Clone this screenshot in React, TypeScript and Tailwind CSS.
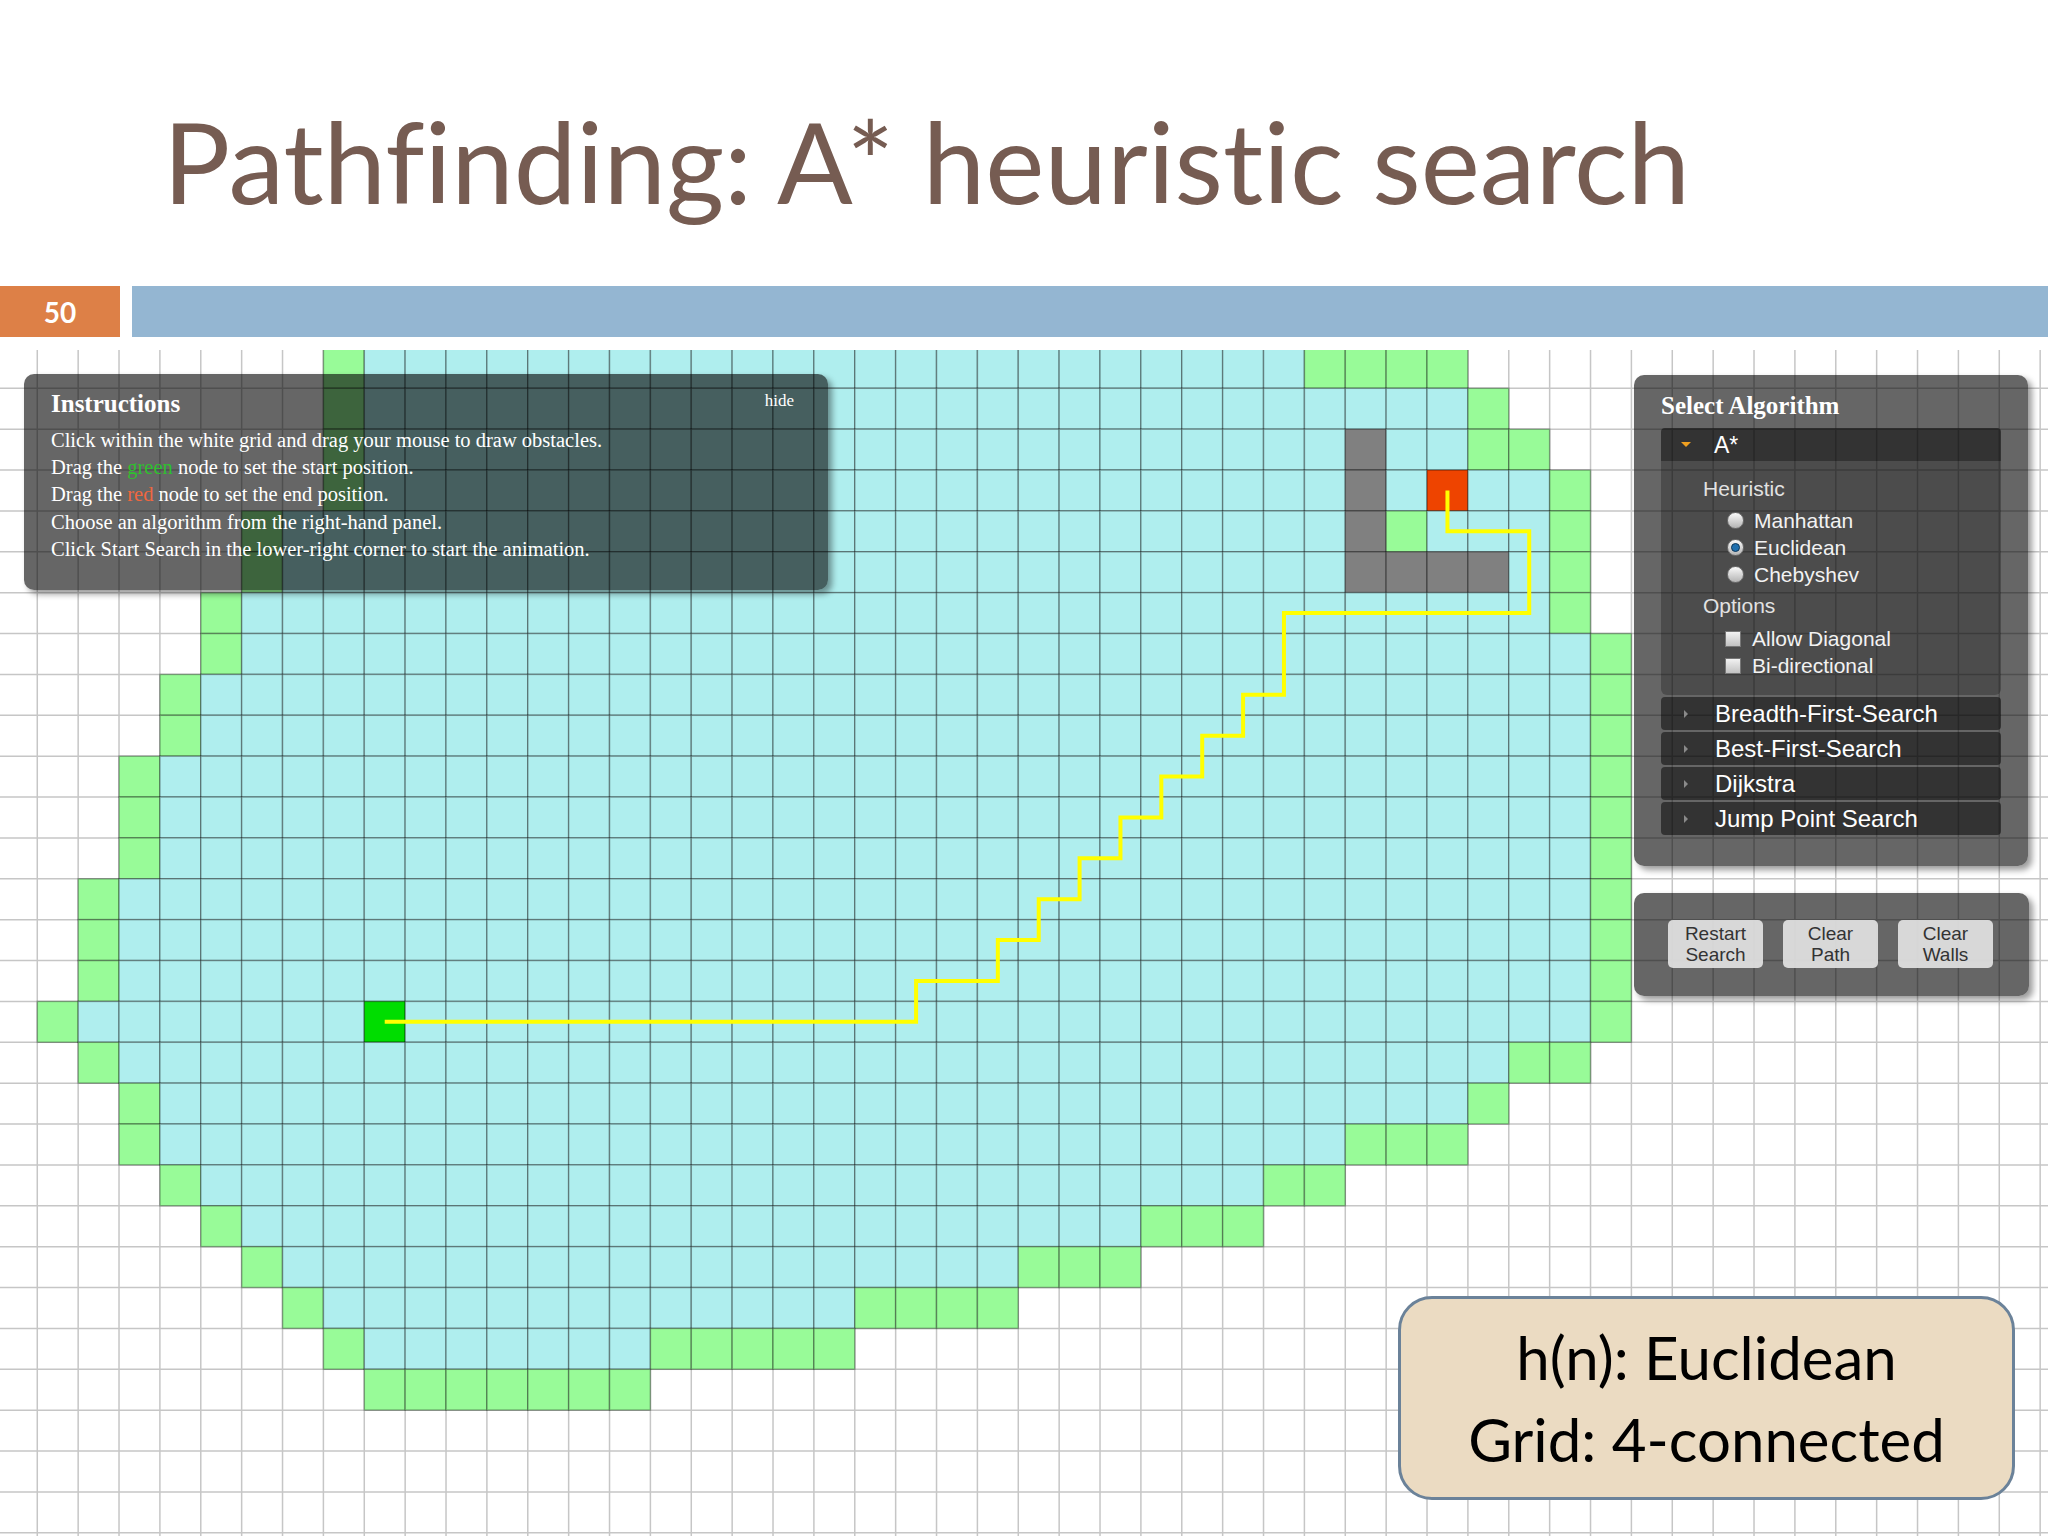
import React from "react";

// grid geometry (px), measured against the slide
const CELL = 40.875;
const OX = -3.6;
const OY = -2.6;
const COLS = 51;
const ROWS = 29;
const W = 2048;
const H = 1186;

type Kind = "open" | "closed" | "wall" | "start" | "end";

const FILL: Record<Kind, string> = {
  open: "#98fb98",
  closed: "#afeeee",
  wall: "#808080",
  start: "#00dd00",
  end: "#ee4400",
};

// per row: [left open col, closed from, closed to, right open from, right open to]
const SPANS: [number, number, number, number, number][] = [
  [8, 9, 31, 32, 35],
  [8, 9, 35, 36, 36],
  [8, 9, 35, 36, 37],
  [8, 9, 37, 38, 38],
  [6, 7, 37, 38, 38],
  [6, 7, 37, 38, 38],
  [5, 6, 37, 38, 38],
  [5, 6, 38, 39, 39],
  [4, 5, 38, 39, 39],
  [4, 5, 38, 39, 39],
  [3, 4, 38, 39, 39],
  [3, 4, 38, 39, 39],
  [3, 4, 38, 39, 39],
  [2, 3, 38, 39, 39],
  [2, 3, 38, 39, 39],
  [2, 3, 38, 39, 39],
  [1, 2, 38, 39, 39],
  [2, 3, 36, 37, 38],
  [3, 4, 35, 36, 36],
  [3, 4, 32, 33, 35],
  [4, 5, 30, 31, 32],
  [5, 6, 27, 28, 30],
  [6, 7, 24, 25, 27],
  [7, 8, 20, 21, 24],
  [8, 9, 15, 16, 20],
  [9, 10, 9, 10, 15],
];

const OVERRIDES: [number, number, Kind][] = [
  [2, 33, "wall"],
  [3, 33, "wall"],
  [4, 33, "wall"],
  [5, 33, "wall"],
  [5, 34, "wall"],
  [5, 35, "wall"],
  [5, 36, "wall"],
  [4, 34, "open"],
  [3, 35, "end"],
  [16, 9, "start"],
];

// path as [col, row]
const PATH: [number, number][] = [
  [9, 16], [22, 16], [22, 15], [24, 15], [24, 14], [25, 14], [25, 13], [26, 13],
  [26, 12], [27, 12], [27, 11], [28, 11], [28, 10], [29, 10], [29, 9], [30, 9],
  [30, 8], [31, 8], [31, 6], [37, 6], [37, 4], [35, 4], [35, 3],
];

function buildCells() {
  const map = new Map<string, Kind>();
  SPANS.forEach(([lg, b0, b1, g0, g1], r) => {
    map.set(`${r},${lg}`, "open");
    for (let c = b0; c <= b1; c++) map.set(`${r},${c}`, "closed");
    for (let c = g0; c <= g1; c++) map.set(`${r},${c}`, "open");
  });
  OVERRIDES.forEach(([r, c, k]) => map.set(`${r},${c}`, k));
  return Array.from(map.entries()).map(([key, kind]) => {
    const [r, c] = key.split(",").map(Number);
    return { r, c, kind };
  });
}

function GridCanvas() {
  const cells = buildCells();
  const pts = PATH.map(([c, r]) => `${OX + CELL * (c + 0.5)},${OY + CELL * (r + 0.5)}`).join(" ");

  return (
    <svg width={W} height={H} viewBox={`0 0 ${W} ${H}`} className="block">
      <rect width={W} height={H} fill="#ffffff" />
      {Array.from({ length: COLS + 1 }, (_, k) => (
        <line key={`v${k}`} x1={OX + CELL * k} y1={0} x2={OX + CELL * k} y2={H} stroke="#c6c6c6" strokeWidth={1.5} />
      ))}
      {Array.from({ length: ROWS + 1 }, (_, k) => (
        <line key={`h${k}`} x1={0} y1={OY + CELL * k} x2={W} y2={OY + CELL * k} stroke="#c6c6c6" strokeWidth={1.5} />
      ))}
      {cells.map(({ r, c, kind }) => (
        <rect
          key={`${r}-${c}`}
          x={OX + CELL * c}
          y={OY + CELL * r}
          width={CELL}
          height={CELL}
          fill={FILL[kind]}
          stroke="rgba(0,0,0,0.33)"
          strokeWidth={1.5}
        />
      ))}
      <polyline points={pts} fill="none" stroke="#ffff00" strokeWidth={4} strokeLinejoin="miter" />
    </svg>
  );
}

function Radio({ checked, label }: { checked?: boolean; label: string }) {
  return (
    <div className="flex items-center h-[27px]">
      <div className="w-[17px] h-[17px] rounded-full border border-[#6f6f6f] bg-gradient-to-b from-[#fafafa] to-[#b4b4b4] grid place-items-center">
        {checked ? <div className="w-[9px] h-[9px] rounded-full bg-[#1f6fae] border border-[#0c3658]" /> : null}
      </div>
      <span className="ml-[10px] text-[#f2f2f2]">{label}</span>
    </div>
  );
}

function Check({ label }: { label: string }) {
  return (
    <div className="flex items-center h-[27px]">
      <div className="w-[16px] h-[16px] border border-[#777] bg-gradient-to-b from-[#f2f2f2] to-[#c2c2c2]" />
      <span className="ml-[11px] text-[#f2f2f2]">{label}</span>
    </div>
  );
}

function AlgoBar({ label }: { label: string }) {
  return (
    <div className="mt-[2px] h-[33px] rounded-[4px] bg-black/50 flex items-center pl-[23px] overflow-hidden">
      <div className="w-0 h-0 border-y-[4px] border-l-[4px] border-y-transparent border-l-[#8a8a8a]" />
      <span className="ml-[27px] text-[24px] leading-[36px] text-white">{label}</span>
    </div>
  );
}

export default function App() {
  const sans = "font-['Liberation_Sans',Arial,sans-serif]";
  const serif = "font-['Liberation_Serif','Times_New_Roman',serif]";

  return (
    <div className="w-[2048px] h-[1536px] bg-white overflow-hidden">
      {/* title */}
      <div className="h-[286px] pt-[105px] pl-[163px] font-['Lato','Open_Sans',sans-serif] text-[112px] leading-none text-[#765c52] [font-variant-ligatures:none]">
        Pathfinding: A* heuristic search
      </div>

      {/* slide number + bar */}
      <div className="flex h-[51px]">
        <div className="w-[120px] bg-[#dd8047] grid place-items-center font-['Lato',sans-serif] font-bold text-[28px] text-white">
          50
        </div>
        <div className="ml-[12px] flex-1 bg-[#94b6d2]" />
      </div>

      {/* demo */}
      <div className="relative mt-[13px] h-[1186px] overflow-hidden">
        <GridCanvas />

        {/* instructions */}
        <div className={`absolute left-[24px] top-[24px] w-[804px] h-[216px] rounded-[10px] bg-black/60 shadow-[4px_4px_6px_rgba(0,0,0,0.4)] px-[27px] pt-[17px] text-white ${serif}`}>
          <div className="flex justify-between items-start">
            <div className="text-[25px] leading-[26px] font-bold">Instructions</div>
            <div className="text-[17px] leading-[20px] mr-[7px]">hide</div>
          </div>
          <div className="mt-[10px] text-[20.5px] leading-[27.2px]">
            <div>Click within the white grid and drag your mouse to draw obstacles.</div>
            <div>
              Drag the <span className="text-[#2fbf2f]">green</span> node to set the start position.
            </div>
            <div>
              Drag the <span className="text-[#f0673f]">red</span> node to set the end position.
            </div>
            <div>Choose an algorithm from the right-hand panel.</div>
            <div>Click Start Search in the lower-right corner to start the animation.</div>
          </div>
        </div>

        {/* algorithm panel */}
        <div className="absolute left-[1634px] top-[25px] w-[394px] h-[491px] rounded-[10px] bg-black/60 shadow-[4px_4px_6px_rgba(0,0,0,0.4)] px-[27px] pt-[17px]">
          <div className={`text-[25px] leading-[28px] font-bold text-white ${serif}`}>Select Algorithm</div>

          <div className={`mt-[8px] ${sans}`}>
            <div className="h-[33px] rounded-t-[4px] bg-black/50 flex items-center pl-[20px] overflow-hidden">
              <div className="w-0 h-0 border-x-[5px] border-t-[5px] border-x-transparent border-t-[#f0a020]" />
              <span className="ml-[23px] text-[23px] leading-[36px] text-white">A*</span>
            </div>
            <div className="h-[234px] rounded-b-[6px] bg-black/25 pl-[42px] pt-[14px] text-[21px] leading-[27px]">
              <div className="text-[#e2e2e2]">Heuristic</div>
              <div className="mt-[5px] pl-[24px]">
                <Radio label="Manhattan" />
                <Radio label="Euclidean" checked />
                <Radio label="Chebyshev" />
              </div>
              <div className="mt-[4px] text-[#e2e2e2]">Options</div>
              <div className="mt-[6px] pl-[22px]">
                <Check label="Allow Diagonal" />
                <Check label="Bi-directional" />
              </div>
            </div>
            <AlgoBar label="Breadth-First-Search" />
            <AlgoBar label="Best-First-Search" />
            <AlgoBar label="Dijkstra" />
            <AlgoBar label="Jump Point Search" />
          </div>
        </div>

        {/* control buttons */}
        <div className={`absolute left-[1634px] top-[543px] w-[395px] h-[103px] rounded-[10px] bg-black/60 shadow-[4px_4px_6px_rgba(0,0,0,0.4)] flex gap-[20px] pl-[34px] pt-[27px] ${sans}`}>
          {[
            ["Restart", "Search"],
            ["Clear", "Path"],
            ["Clear", "Walls"],
          ].map(([a, b]) => (
            <div
              key={a + b}
              className="w-[95px] h-[48px] rounded-[5px] bg-[#e4e4e4]/90 text-[#333] text-[19px] leading-[21.5px] flex flex-col items-center justify-center"
            >
              <span>{a}</span>
              <span>{b}</span>
            </div>
          ))}
        </div>

        {/* callout */}
        <div className="absolute left-[1398px] top-[946px] w-[617px] h-[204px] rounded-[34px] border-[3px] border-[#6b8299] bg-[#ebdbc2] flex flex-col items-center justify-center font-['Lato','Open_Sans',sans-serif] text-[60px] leading-[82px] text-black">
          <div>h(n): Euclidean</div>
          <div>Grid: 4-connected</div>
        </div>
      </div>
    </div>
  );
}
